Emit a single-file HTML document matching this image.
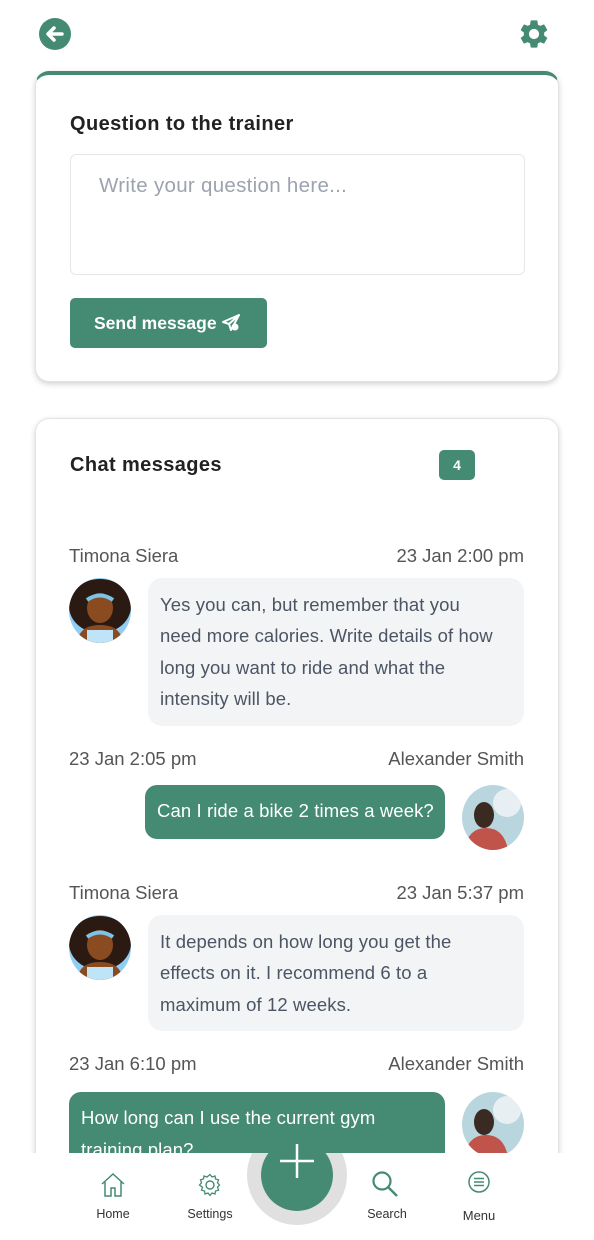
<!DOCTYPE html>
<html><head><meta charset="utf-8"><style>
*{box-sizing:border-box;margin:0;padding:0}
html,body{width:594px;height:1240px;overflow:hidden}
body{background:#fff;font-family:"Liberation Sans",sans-serif;position:relative;color:#222}
.abs{position:absolute}
.card{position:absolute;left:35px;width:524px;background:#fff;border-radius:14px;box-shadow:0 2px 6px rgba(0,0,0,.18);border:1px solid #e3e3e3}
.t{font-size:20px;font-weight:bold;color:#222;letter-spacing:.4px}
.meta{position:absolute;font-size:18.5px;color:#555;white-space:nowrap}
.bub{position:absolute;background:#f3f4f6;border-radius:14px;font-size:18.5px;color:#4b5563;line-height:31.3px;padding:11px 12px;white-space:nowrap;letter-spacing:.1px}
.gb{position:absolute;background:#458b73;border-radius:12px;color:#fff;font-size:18.5px;line-height:32px;padding:11px 12px;white-space:nowrap;letter-spacing:.1px}
.av{position:absolute;width:62px;height:65px;border-radius:50%;overflow:hidden}
.nl{position:absolute;font-size:12.5px;color:#333;transform:translateX(-50%)}
</style></head><body>
<svg class="abs" style="left:39px;top:18px" width="32" height="32" viewBox="0 0 32 32"><circle cx="16" cy="16" r="16" fill="#458b73"/><path d="M23 16H10M15 10l-6 6 6 6" stroke="#fff" stroke-width="3.5" fill="none" stroke-linecap="round" stroke-linejoin="round"/></svg>
<svg class="abs" style="left:517px;top:17px" width="34" height="34" viewBox="0 0 24 24"><path fill="#458b73" d="M19.14 12.94c.04-.3.06-.61.06-.94s-.02-.64-.07-.94l2.03-1.58a.49.49 0 00.12-.61l-1.920-3.32a.49.49 0 00-.59-.22l-2.39.96a7 7 0 00-1.62-.94l-.36-2.54a.48.48 0 00-.48-.41h-3.84a.48.48 0 00-.47.41l-.36 2.54c-.59.24-1.13.57-1.62.94l-2.39-.96a.48.48 0 00-.59.22L2.74 8.87a.47.47 0 00.12.61l2.03 1.58c-.05.3-.09.63-.09.94s.02.64.07.94l-2.03 1.58a.49.49 0 00-.12.61l1.92 3.32c.12.22.37.29.59.22l2.39-.96c.5.38 1.03.7 1.62.94l.36 2.54c.05.24.24.41.48.41h3.84c.24 0 .44-.17.47-.41l.36-2.54c.59-.24 1.13-.56 1.62-.94l2.39.96c.22.08.47 0 .59-.22l1.92-3.32a.47.47 0 00-.12-.61l-2.010-1.58zM12 15.6A3.6 3.6 0 1112 8.4a3.6 3.6 0 010 7.2z"/></svg>

<div class="card" style="top:71px;height:311px;border-top:4px solid #458b73">
<div class="t abs" style="left:34px;top:38px">Question to the trainer</div>
<div class="abs" style="left:34px;top:79px;width:455px;height:121px;border:1.5px solid #e5e7eb;border-radius:6px;font-size:20.5px;color:#9ca3af;padding:19px 28px;letter-spacing:.3px">Write your question here...</div>
<div class="abs" style="left:34px;top:223px;width:197px;height:50px;background:#458b73;border-radius:5px;color:#fff;font-weight:bold;font-size:17.5px;padding:15px 0 0 24px;white-space:nowrap">Send message
<svg style="vertical-align:-3px" width="20" height="18" viewBox="0 0 20 18"><path d="M18 1L2 8l6 2 2 6z M8 10L18 1" stroke="#fff" stroke-width="2" fill="none" stroke-linejoin="round"/><circle cx="14" cy="13" r="3.5" fill="#fff"/></svg></div>
</div>

<div class="card" style="top:418px;height:850px">
<div class="t abs" style="left:34px;top:35px">Chat messages</div>
<div class="abs" style="left:403px;top:31px;width:36px;height:30px;background:#458b73;border-radius:5px;color:#fff;font-weight:bold;font-size:14px;text-align:center;line-height:30px">4</div>
</div>

<div class="meta" style="left:69px;top:545px">Timona Siera</div>
<div class="meta" style="right:70px;top:545px">23 Jan 2:00 pm</div>
<div class="av" style="left:69px;top:578px"><svg width="62" height="65" viewBox="0 0 62 65"><rect width="62" height="65" fill="#90cdf4"/><ellipse cx="31" cy="28" rx="31" ry="27" fill="#2a1a12"/><path d="M8 65q2-18 23-18t23 18z" fill="#8a4b20"/><rect x="18" y="52" width="26" height="13" fill="#bfe3f7"/><ellipse cx="31" cy="30" rx="13" ry="15" fill="#8a4b20"/><path d="M18 22q13-9 26 0" stroke="#7cc3e8" stroke-width="4" fill="none"/></svg></div>
<div class="bub" style="left:148px;top:578px;width:376px;height:148px">Yes you can, but remember that you<br>need more calories. Write details of how<br>long you want to ride and what the<br>intensity will be.</div>

<div class="meta" style="left:69px;top:748px">23 Jan 2:05 pm</div>
<div class="meta" style="right:70px;top:748px">Alexander Smith</div>
<div class="gb" style="left:145px;top:785px;width:300px;height:54px;padding-top:10px">Can I ride a bike 2 times a week?</div>
<div class="av" style="left:462px;top:785px"><svg width="62" height="65" viewBox="0 0 62 65"><rect width="62" height="65" fill="#b9d6df"/><circle cx="45" cy="18" r="14" fill="#e8eff2"/><ellipse cx="22" cy="30" rx="10" ry="13" fill="#3a2a22"/><path d="M2 65q4-22 22-22t22 22z" fill="#c0544a"/></svg></div>

<div class="meta" style="left:69px;top:882px">Timona Siera</div>
<div class="meta" style="right:70px;top:882px">23 Jan 5:37 pm</div>
<div class="av" style="left:69px;top:915px"><svg width="62" height="65" viewBox="0 0 62 65"><rect width="62" height="65" fill="#90cdf4"/><ellipse cx="31" cy="28" rx="31" ry="27" fill="#2a1a12"/><path d="M8 65q2-18 23-18t23 18z" fill="#8a4b20"/><rect x="18" y="52" width="26" height="13" fill="#bfe3f7"/><ellipse cx="31" cy="30" rx="13" ry="15" fill="#8a4b20"/><path d="M18 22q13-9 26 0" stroke="#7cc3e8" stroke-width="4" fill="none"/></svg></div>
<div class="bub" style="left:148px;top:915px;width:376px;height:116px">It depends on how long you get the<br>effects on it. I recommend 6 to a<br>maximum of 12 weeks.</div>

<div class="meta" style="left:69px;top:1053px">23 Jan 6:10 pm</div>
<div class="meta" style="right:70px;top:1053px">Alexander Smith</div>
<div class="gb" style="left:69px;top:1092px;width:376px;height:90px;padding-top:10px">How long can I use the current gym<br>training plan?</div>
<div class="av" style="left:462px;top:1092px"><svg width="62" height="65" viewBox="0 0 62 65"><rect width="62" height="65" fill="#b9d6df"/><circle cx="45" cy="18" r="14" fill="#e8eff2"/><ellipse cx="22" cy="30" rx="10" ry="13" fill="#3a2a22"/><path d="M2 65q4-22 22-22t22 22z" fill="#c0544a"/></svg></div>

<div class="abs" style="left:0;top:1153px;width:594px;height:87px;background:#fff;overflow:hidden">
<div class="abs" style="left:247px;top:-28px;width:100px;height:100px;border-radius:50%;background:#e0e0e0"></div>
</div>
<div class="abs" style="left:261px;top:1139px;width:72px;height:72px;border-radius:50%;background:#458b73"></div>
<svg class="abs" style="left:279px;top:1143px" width="36" height="36" viewBox="0 0 36 36"><path d="M18 1v34M1 18h34" stroke="#fff" stroke-width="2.5"/></svg>

<svg class="abs" style="left:100px;top:1172px" width="26" height="26" viewBox="0 0 26 26"><path d="M2 12L13 2l11 10M5 10v14h6v-8h4v8h6V10" stroke="#458b73" stroke-width="1.5" fill="none"/></svg>
<div class="nl" style="left:113px;top:1207px">Home</div>
<svg class="abs" style="left:198px;top:1173px" width="24" height="24" viewBox="0 0 24 24"><circle cx="12" cy="12" r="4" stroke="#458b73" stroke-width="1.4" fill="none"/><path d="M12 1.5l2 2.5 3-1 .5 3 3 .8-1 3 2 2.2-2 2.2 1 3-3 .8-.5 3-3-1-2 2.5-2-2.5-3 1-.5-3-3-.8 1-3L1.5 12l2-2.2-1-3 3-.8.5-3 3 1z" stroke="#458b73" stroke-width="1.3" fill="none"/></svg>
<div class="nl" style="left:210px;top:1207px">Settings</div>
<svg class="abs" style="left:371px;top:1170px" width="28" height="28" viewBox="0 0 28 28"><circle cx="11" cy="11" r="8.5" stroke="#458b73" stroke-width="2.2" fill="none"/><path d="M17 17l9 9" stroke="#458b73" stroke-width="2.4"/></svg>
<div class="nl" style="left:387px;top:1207px">Search</div>
<svg class="abs" style="left:468px;top:1171px" width="22" height="22" viewBox="0 0 22 22"><circle cx="11" cy="11" r="10" stroke="#458b73" stroke-width="1.5" fill="none"/><path d="M6 7.5h10M6 11h10M6 14.5h10" stroke="#458b73" stroke-width="1.5"/></svg>
<div class="nl" style="left:479px;top:1208px;font-size:13px">Menu</div>
</body></html>
